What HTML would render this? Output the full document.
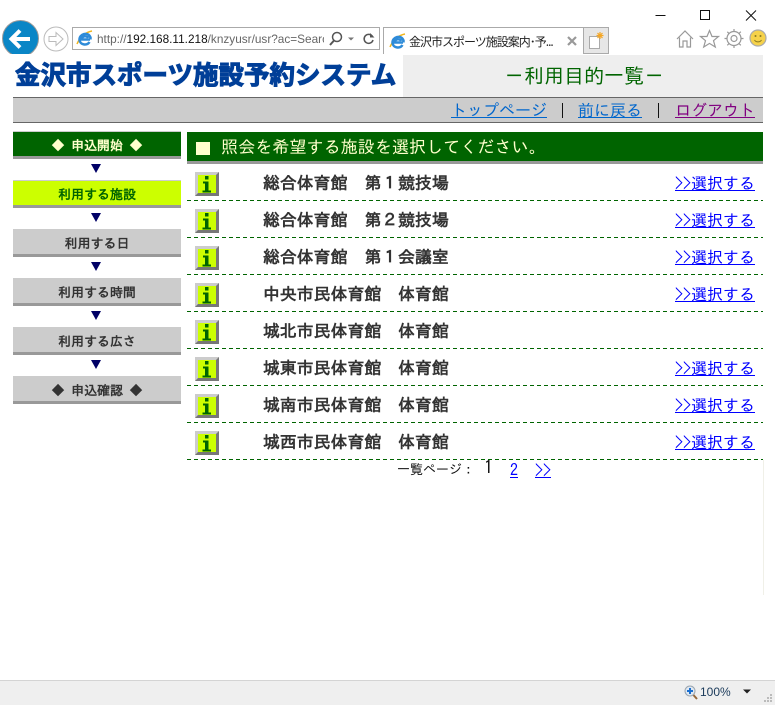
<!DOCTYPE html>
<html lang="ja"><head><meta charset="utf-8"><title>金沢市スポーツ施設案内・予約</title>
<style>
html,body{margin:0;padding:0;background:#fff;width:775px;height:705px;overflow:hidden}
body{position:relative;font-family:"Liberation Sans","IPAGothic","Noto Sans CJK JP",sans-serif}
.a{position:absolute;white-space:nowrap}
.j{font-family:"IPAGothic","Noto Sans CJK JP",monospace}
a{color:#00f;text-decoration:underline}
.side{position:absolute;left:13px;width:168px;height:28px;box-sizing:border-box;background:#ccc;border-top:1px solid #ccc;border-bottom:3px solid #999;text-align:center;font:bold 13px/28px "IPAGothic","Noto Sans CJK JP",monospace;color:#333}
.arrow{position:absolute;left:91px;width:0;height:0;border-left:5.5px solid transparent;border-right:5.5px solid transparent;border-top:9px solid #000066}
.name{position:absolute;left:263px;font:bold 16.9px/20px "IPAGothic","Noto Sans CJK JP",monospace;color:#333;white-space:nowrap}
.sel{position:absolute;left:675px;font:16px/20px "IPAGothic","Noto Sans CJK JP",monospace;white-space:nowrap}
.dash{position:absolute;left:187px;width:576px;height:1px;background:repeating-linear-gradient(90deg,#006400 0 4px,#fff 4px 7px)}
.i{position:absolute;left:195px;width:24px;height:24px;box-sizing:border-box;background:#ccff00;border:3px solid;border-color:#ccc #777 #777 #ccc}
.i svg{display:block;overflow:visible}
</style></head><body>

<!-- window controls -->
<svg class="a" style="left:650px;top:5px" width="115" height="20" fill="none" stroke="#111" stroke-width="1">
<path d="M5.500 10.500H15.500"/><rect x="50.500" y="5.500" width="9" height="9"/><path d="M96 5.500l10 10M106 5.500l-10 10"/>
</svg>

<!-- back / forward -->
<svg class="a" style="left:0;top:18px" width="72" height="36">
<circle cx="20.500" cy="20.500" r="18" fill="#0a86c6" stroke="#9a9a9a"/>
<path d="M12 21H30M20 12.500L11.500 21 20 29.500" fill="none" stroke="#fff" stroke-width="4"/>
<circle cx="56" cy="21" r="12" fill="#fff" stroke="#bbb"/>
<path d="M49 18.500H56V14.500L63 21 56 27.500V23.500H49Z" fill="#fff" stroke="#bbb"/>
</svg>

<!-- address bar -->
<div class="a" style="left:72px;top:27px;width:308px;height:23px;border:1px solid #aaa;box-sizing:border-box;background:#fff"></div>
<svg class="a" style="left:75px;top:29px" width="20" height="20" viewBox="0 0 20 20">
<path d="M2 15C5 8 11 3 17 2" fill="none" stroke="#f1b51c" stroke-width="1.500"/>
<path d="M15 10.500H6.500C7 7 12 6 13 9M14.500 13C12 17 5 16 4.500 11C4 5 13 2 15.500 8.500L15.500 10.500" fill="none" stroke="#2e8bd8" stroke-width="2.500"/>
</svg>
<div class="a" style="left:97px;top:31px;width:227px;overflow:hidden;font-size:11.800px;line-height:16px;color:#666">http://<span style="color:#111">192.168.11.218</span>/knzyusr/usr?ac=Search</div>
<svg class="a" style="left:328px;top:30px" width="50" height="18" fill="none" stroke="#555">
<circle cx="9" cy="7" r="4.500" stroke-width="1.500"/><path d="M6 10.500L2 15" stroke-width="2"/>
<path d="M20 7.500h6l-3 3z" fill="#777" stroke="none"/>
<path d="M44.500 6.500A4.500 4.500 0 1 0 45 10" stroke-width="1.500"/><path d="M42 3v4.500h4.500z" fill="#555" stroke="none"/>
</svg>

<!-- tab -->
<div class="a" style="left:383px;top:27px;width:1px;height:27px;background:#aaa"></div>
<div class="a" style="left:384px;top:27px;width:199px;height:1px;background:#aaa"></div>
<svg class="a" style="left:388px;top:32px" width="20" height="20" viewBox="0 0 20 20">
<path d="M2 15C5 8 11 3 17 2" fill="none" stroke="#f1b51c" stroke-width="1.500"/>
<path d="M15 10.500H6.500C7 7 12 6 13 9M14.500 13C12 17 5 16 4.500 11C4 5 13 2 15.500 8.500L15.500 10.500" fill="none" stroke="#2e8bd8" stroke-width="2.500"/>
</svg>
<div class="a" style="left:409px;top:34px;font-size:12px;letter-spacing:-1px;line-height:16px;color:#222;font-family:'Noto Sans CJK JP','Liberation Sans',sans-serif">金沢市スポーツ施設案内･予...</div>
<svg class="a" style="left:566px;top:35px" width="12" height="12"><path d="M2 2l8 8M10 2l-8 8" stroke="#999" stroke-width="2.200"/></svg>
<div class="a" style="left:583px;top:27px;width:26px;height:27px;background:#e6e6e6;border:1px solid #aaa;box-sizing:border-box"></div>
<svg class="a" style="left:587px;top:31px" width="20" height="20"><path d="M2.500 5.500H12.500V17.500H2.500Z" fill="#fff" stroke="#aaa"/><path d="M13 1v7M9.500 4.500h7M10.500 2l5 5M15.500 2l-5 5" stroke="#f5a623" stroke-width="1.200"/></svg>

<!-- right toolbar icons -->
<svg class="a" style="left:675px;top:28px" width="95" height="22" fill="none" stroke="#999" stroke-width="1.200">
<path d="M2 11L10 3l8 8M4.500 9.500V19H8V13h4v6h3.500V9.500"/>
<path d="M34.500 2.500l2.500 6h6.500l-5 4.200 1.800 6.300-5.800-3.600-5.800 3.600 1.800-6.300-5-4.200H32z"/>
<circle cx="59" cy="10.500" r="3"/><circle cx="59" cy="10.500" r="7"/><path d="M59 1v2.500M59 17.500V20M49.500 10.500H52M66 10.500h2.500M52.300 3.800l1.800 1.800M64 15.500l1.800 1.800M52.300 17.300l1.800-1.800M64 5.500l1.800-1.800"/>
<circle cx="83" cy="10" r="8" fill="#f6d24a" stroke="#aaa"/>
<circle cx="80.500" cy="8" r="1" fill="#8a7a20" stroke="none"/><circle cx="85.500" cy="8" r="1" fill="#8a7a20" stroke="none"/><path d="M79.500 12c1.500 2.500 5.500 2.500 7 0" stroke="#8a7a20" stroke-width="1"/>
</svg>

<!-- logo -->
<div class="a" style="left:15px;top:58px;width:383px;height:31px;font:bold 25.500px/31px 'Noto Sans CJK JP','Liberation Sans',sans-serif;color:#003f98;-webkit-text-stroke:1.100px #003f98;overflow:hidden">金沢市スポーツ施設予約システム</div>

<!-- title -->
<div class="a" style="left:403px;top:55px;width:360px;height:42px;background:#eee"></div>
<div class="a j" style="left:504px;top:64px;font-size:20px;line-height:24px;color:#006400">－利用目的一覧－</div>

<!-- top nav -->
<div class="a" style="left:13px;top:97px;width:750px;height:26px;box-sizing:border-box;background:#ccc;border-top:1px solid #666;border-bottom:1px solid #666"></div>
<a class="a j" style="left:451px;top:100px;font-size:16px;line-height:20px;color:#0066cc">トップページ</a>
<div class="a" style="left:562px;top:103px;width:1px;height:15px;background:#111"></div>
<a class="a j" style="left:578px;top:100px;font-size:16px;line-height:20px;color:#0066cc">前に戻る</a>
<div class="a" style="left:658px;top:103px;width:1px;height:15px;background:#111"></div>
<a class="a j" style="left:675px;top:100px;font-size:16px;line-height:20px;color:#800080">ログアウト</a>

<!-- sidebar -->
<div class="side" style="top:131px;background:#006400;color:#ffffcc">◆ 申込開始 ◆</div>
<div class="arrow" style="top:164px"></div>
<div class="side" style="top:180px;background:#ccff00;color:#006400">利用する施設</div>
<div class="arrow" style="top:213px"></div>
<div class="side" style="top:229px">利用する日</div>
<div class="arrow" style="top:262px"></div>
<div class="side" style="top:278px">利用する時間</div>
<div class="arrow" style="top:311px"></div>
<div class="side" style="top:327px">利用する広さ</div>
<div class="arrow" style="top:360px"></div>
<div class="side" style="top:376px">◆ 申込確認 ◆</div>

<!-- main header -->
<div class="a" style="left:187px;top:132px;width:576px;height:32px;box-sizing:border-box;background:#006400;border-bottom:3px solid #999"></div>
<div class="a" style="left:196px;top:142px;width:14px;height:13px;background:#ffffcc"></div>
<div class="a j" style="left:221px;top:138px;font-size:17.100px;line-height:20px;color:#ffffcc">照会を希望する施設を選択してください。</div>

<!-- rows -->
<div class="i" style="top:172px"><svg width="18" height="18"><path d="M7 1h3.500v3.500H7zM5 6.500h5.500V15.500H13V17.500H4.500V15.500H7V8.500H5z" fill="#006400"/></svg></div>
<div class="name" style="top:174px">総合体育館　第１競技場</div><a class="sel" style="top:173px">&gt;&gt;選択する</a><div class="dash" style="top:200px"></div>

<div class="i" style="top:209px"><svg width="18" height="18"><path d="M7 1h3.500v3.500H7zM5 6.500h5.500V15.500H13V17.500H4.500V15.500H7V8.500H5z" fill="#006400"/></svg></div>
<div class="name" style="top:211px">総合体育館　第２競技場</div><a class="sel" style="top:210px">&gt;&gt;選択する</a><div class="dash" style="top:237px"></div>

<div class="i" style="top:246px"><svg width="18" height="18"><path d="M7 1h3.500v3.500H7zM5 6.500h5.500V15.500H13V17.500H4.500V15.500H7V8.500H5z" fill="#006400"/></svg></div>
<div class="name" style="top:248px">総合体育館　第１会議室</div><a class="sel" style="top:247px">&gt;&gt;選択する</a><div class="dash" style="top:274px"></div>

<div class="i" style="top:283px"><svg width="18" height="18"><path d="M7 1h3.500v3.500H7zM5 6.500h5.500V15.500H13V17.500H4.500V15.500H7V8.500H5z" fill="#006400"/></svg></div>
<div class="name" style="top:285px">中央市民体育館　体育館</div><a class="sel" style="top:284px">&gt;&gt;選択する</a><div class="dash" style="top:311px"></div>

<div class="i" style="top:320px"><svg width="18" height="18"><path d="M7 1h3.500v3.500H7zM5 6.500h5.500V15.500H13V17.500H4.500V15.500H7V8.500H5z" fill="#006400"/></svg></div>
<div class="name" style="top:322px">城北市民体育館　体育館</div><div class="dash" style="top:348px"></div>

<div class="i" style="top:357px"><svg width="18" height="18"><path d="M7 1h3.500v3.500H7zM5 6.500h5.500V15.500H13V17.500H4.500V15.500H7V8.500H5z" fill="#006400"/></svg></div>
<div class="name" style="top:359px">城東市民体育館　体育館</div><a class="sel" style="top:358px">&gt;&gt;選択する</a><div class="dash" style="top:385px"></div>

<div class="i" style="top:394px"><svg width="18" height="18"><path d="M7 1h3.500v3.500H7zM5 6.500h5.500V15.500H13V17.500H4.500V15.500H7V8.500H5z" fill="#006400"/></svg></div>
<div class="name" style="top:396px">城南市民体育館　体育館</div><a class="sel" style="top:395px">&gt;&gt;選択する</a><div class="dash" style="top:422px"></div>

<div class="i" style="top:431px"><svg width="18" height="18"><path d="M7 1h3.500v3.500H7zM5 6.500h5.500V15.500H13V17.500H4.500V15.500H7V8.500H5z" fill="#006400"/></svg></div>
<div class="name" style="top:433px">城西市民体育館　体育館</div><a class="sel" style="top:432px">&gt;&gt;選択する</a><div class="dash" style="top:459px"></div>

<!-- pager -->
<div class="a j" style="left:397px;top:462px;font-size:13px;line-height:16px;color:#111">一覧ページ：</div>
<div class="a j" style="left:484px;top:458px;font-size:18px;line-height:20px;color:#111">1</div>
<a class="a j" style="left:510px;top:460px;font-size:16px;line-height:20px">2</a>
<a class="a j" style="left:535px;top:460px;font-size:16px;line-height:20px">&gt;&gt;</a>

<!-- page edge -->
<div class="a" style="left:763px;top:460px;width:1px;height:135px;background:#f0f0e8"></div>

<!-- status bar -->
<div class="a" style="left:0;top:680px;width:775px;height:25px;background:#efefef;border-top:1px solid #d4d4d4;box-sizing:border-box"></div>
<svg class="a" style="left:684px;top:685px" width="14" height="15">
<path d="M9 9.500l4 4.500" stroke="#96683a" stroke-width="2"/><circle cx="6" cy="6" r="5" fill="#dfe8f2" stroke="#9aa5b0"/><path d="M6 3v6M3 6h6" stroke="#1a6fd0" stroke-width="2"/>
</svg>
<div class="a" style="left:700px;top:685px;font-size:12px;line-height:15px;color:#1a3a5a">100%</div>
<svg class="a" style="left:743px;top:689px" width="9" height="6"><path d="M0 .500h8l-4 4z" fill="#222"/></svg>
<svg class="a" style="left:763px;top:693px" width="10" height="10" fill="#bbb"><rect x="7" y="1" width="2" height="2"/><rect x="4" y="4" width="2" height="2"/><rect x="7" y="4" width="2" height="2"/><rect x="1" y="7" width="2" height="2"/><rect x="4" y="7" width="2" height="2"/><rect x="7" y="7" width="2" height="2"/></svg>
</body></html>
